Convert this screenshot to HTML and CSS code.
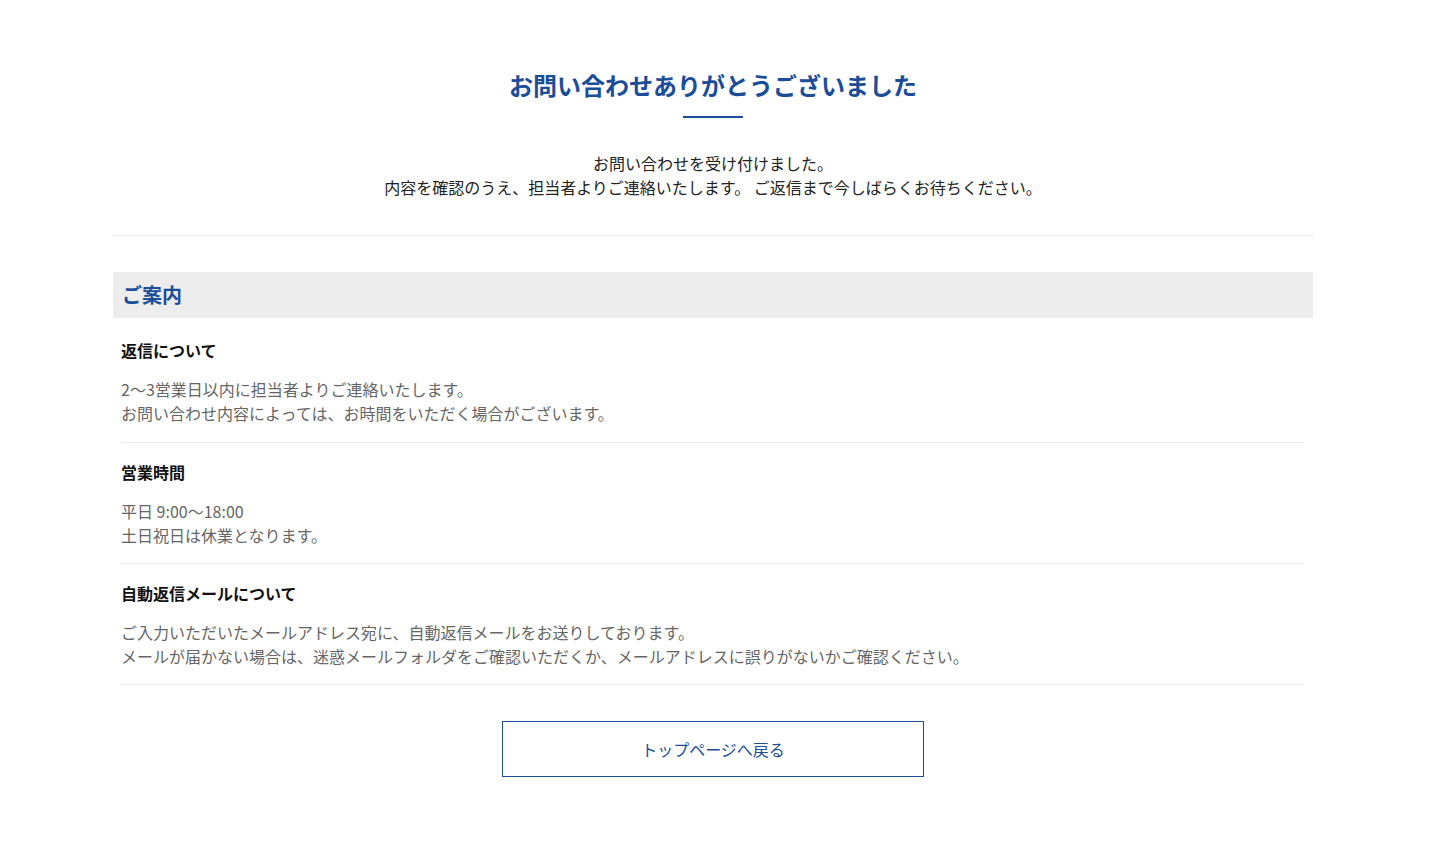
FILE: index.html
```html
<!DOCTYPE html>
<html lang="ja">
<head>
    <meta charset="UTF-8">
    <meta name="viewport" content="width=device-width, initial-scale=1.0">
    <title>お問い合わせ完了</title>
    <link rel="stylesheet" href="styles.css">
</head>
<body>
    <main class="thanks-page">
        <section class="thanks-head">
            <h1 class="thanks-title">お問い合わせありがとうございました</h1>
            <p class="thanks-lead">お問い合わせを受け付けました。<br>内容を確認のうえ、担当者よりご連絡いたします。 ご返信まで今しばらくお待ちください。</p>
        </section>

        <section class="guide">
            <h2 class="guide-title">ご案内</h2>
            <div class="guide-item">
                <h3>返信について</h3>
                <p>2〜3営業日以内に担当者よりご連絡いたします。<br>お問い合わせ内容によっては、お時間をいただく場合がございます。</p>
            </div>
            <div class="guide-item">
                <h3>営業時間</h3>
                <p>平日 9:00〜18:00<br>土日祝日は休業となります。</p>
            </div>
            <div class="guide-item">
                <h3>自動返信メールについて</h3>
                <p>ご入力いただいたメールアドレス宛に、自動返信メールをお送りしております。<br>メールが届かない場合は、迷惑メールフォルダをご確認いただくか、メールアドレスに誤りがないかご確認ください。</p>
            </div>
        </section>

        <div class="back-wrap">
            <a class="back-btn" href="#">トップページへ戻る</a>
        </div>
    </main>
</body>
</html>
```

FILE: styles.css
```css
body {
    margin: 0;
    font-family: "Noto Sans CJK JP", "Noto Sans", sans-serif;
    color: #222;
    background: #fff;
}
.thanks-page {
    width: 1200px;
    margin-left: 113px;
    padding-top: 67px;
    padding-bottom: 66px;
}
.thanks-head {
    text-align: center;
    padding-bottom: 36px;
    border-bottom: 1px solid #ebebeb;
}
.thanks-title {
    margin: 0;
    font-size: 24px;
    line-height: 36px;
    font-weight: bold;
    color: #1b4d98;
}
.thanks-title::after {
    content: "";
    display: block;
    width: 60px;
    height: 2px;
    background: #1b4d98;
    margin: 13px auto 0;
}
.thanks-lead {
    margin: 33px 0 0;
    font-size: 16px;
    line-height: 24px;
    color: #222;
}
.guide {
    margin-top: 36px;
}
.guide-title {
    margin: 0;
    background: #ededed;
    color: #1b4d98;
    font-size: 20px;
    line-height: 46px;
    font-weight: bold;
    padding: 0 9px;
}
.guide-item {
    margin: 0 9px 0 8px;
    padding: 17px 0 16px;
    border-bottom: 1px solid #ebebeb;
}
.guide-item:first-of-type {
    padding-top: 20px;
    padding-bottom: 17px;
}
.guide-item h3 {
    margin: 0;
    font-size: 16px;
    line-height: 24px;
    font-weight: bold;
    color: #111;
}
.guide-item p {
    margin: 15px 0 0;
    font-size: 16px;
    line-height: 24px;
    color: #666;
}
.back-wrap {
    display: flex;
    justify-content: center;
    margin-top: 36px;
}
.back-btn {
    display: flex;
    align-items: center;
    justify-content: center;
    width: 420px;
    height: 54px;
    border: 1px solid #1b4d98;
    color: #1b4d98;
    font-size: 16px;
    text-decoration: none;
}
```
